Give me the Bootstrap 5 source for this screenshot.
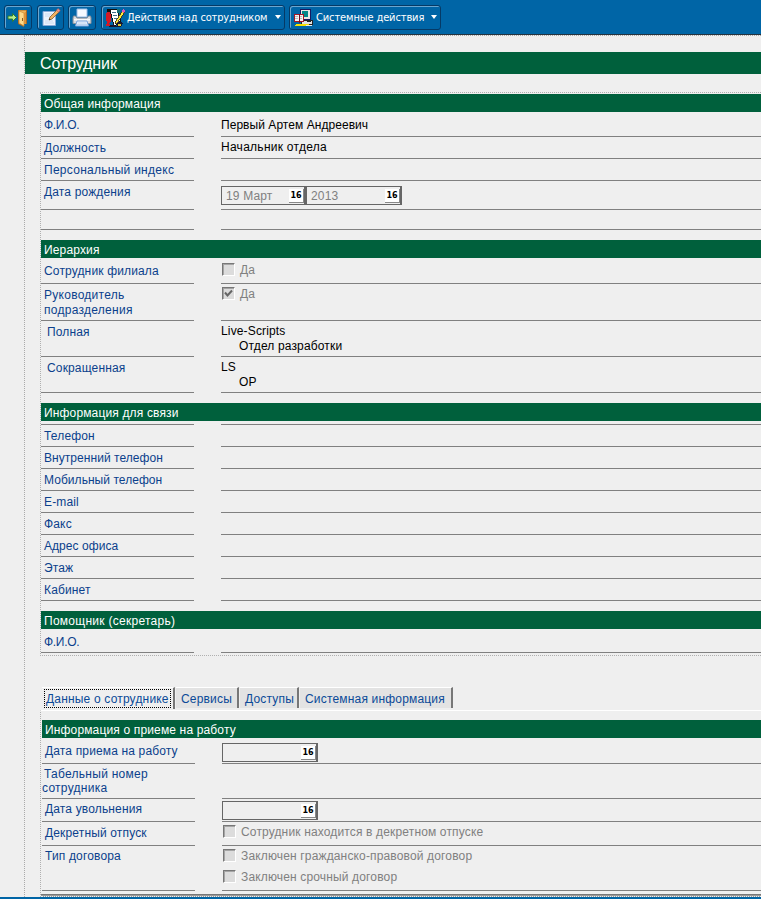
<!DOCTYPE html>
<html lang="ru">
<head>
<meta charset="utf-8">
<meta name="viewport" content="width=device-width, initial-scale=1">
<title>Сотрудник</title>
<link rel="stylesheet" href="https://cdn.jsdelivr.net/npm/bootstrap@5.3.0/dist/css/bootstrap.min.css">
<style>
body{background:#efefef;font:12px/15px "Liberation Sans",Arial,sans-serif;letter-spacing:.15px;color:#000;height:899px;overflow:hidden}
.toolbar{height:35px;background:#0065a6;border-bottom:1px solid #24333f;padding:5px 0 0 4px;gap:4px;font-family:"DejaVu Sans Condensed","DejaVu Sans",sans-serif;font-stretch:condensed}
.tool{height:25px;width:28px;padding:0;border:1px solid #053a66;border-radius:3px;box-shadow:inset 1px 1px #6ba6d0;background:#0065a6;color:#fff!important;font-size:11px;line-height:15px;letter-spacing:-.12px}
.tool:nth-child(1),.tool:nth-child(3){margin-right:1px}
.tool:nth-child(2){width:27px}
.tool svg{flex:none}
.tool-wide{padding:0 3px}
.tool-wide.dropdown-toggle::after{border-top:4px solid #fff;border-left:3.5px solid transparent;border-right:3.5px solid transparent;margin:0 0 2px auto}
.tool-staff{width:184px}
.tool-staff span{margin-left:1px;letter-spacing:-.15px}
.tool-system{width:152px}
.tool-system span{margin-left:3px}
.sheet{margin-left:24px;height:862px;border-left:1px dotted #aaa;border-top:1px dotted #aaa;padding-top:16px}
.sheet-title{height:22px;background:#00603c;color:#fff;font-size:16px;line-height:24px;padding-left:15px;letter-spacing:-.1px}
.panel{margin-left:15px;border-left:1px dotted #b0b0b0}
.panel-top{margin-top:18px;border-top:1px dotted #b0b0b0;border-bottom:1px dotted #b0b0b0;padding:1px 0 2px}
.panel-low{border-top:1px solid #fff;padding-top:9px}
.panel-low .band,.panel-low .line{margin-left:1px}
.band{height:18px;background:#00603c;color:#fff;line-height:20px;padding-left:3px}
.band-gap{margin-top:10px}
.line{height:22px}
.cap,.val{border-bottom:1px solid #808080}
.cap{width:153px;margin-right:27px;padding:4px 0 0 3px;color:#0b3f8c;flex:none}
.val{padding-top:3px}
.first .cap{padding-top:6px}.first .val{padding-top:5px}
.t2 .cap{padding-top:3px}
.h4x{height:4px}.h4x .cap,.h4x .val{padding:0}
.h20{height:20px}.h23{height:23px}.h24{height:24px}.h25{height:25px}.h26{height:26px}.h29{height:29px}.h35{height:35px}.h36{height:36px}.h37{height:37px}.h45{height:45px}
.first .val.full-name{padding-top:6px;letter-spacing:.05px}
.loose{letter-spacing:.27px}
.tight{letter-spacing:-.3px}
.snug{letter-spacing:.05px}
.val.dates{padding-top:5px}
.date{height:19px;width:96px;border:1px solid #666;border-right-width:2px;padding:1px 0 0 4px;color:#808080;line-height:17px}
.date-short{width:85px}
.date-low .val{padding-top:2px}
.date-low.first .val{padding-top:5px}
.cal{width:15px;height:14px;background:#fff;border-right:1px solid #888;border-bottom:1px solid #888;color:#000;font:bold 8px/14px "DejaVu Sans",sans-serif;letter-spacing:0;text-align:center;margin-top:1px}
.tick{width:13px;height:13px;background:#dcdcdc;border:1px solid;border-color:#777 #fff #fff #777;box-shadow:inset 1px 1px #a5a5a5;margin:-2px 5px 0 1px;flex:none}
.off{color:#808080;height:15px}
.later{margin-top:6px}
.indent{padding-left:6px}
.sub{padding-left:18px}
.two-line{line-height:14px;padding-left:0;text-indent:2px}
.tabs{margin:31px 0 0 17px;height:23px;color:#0b4a98;letter-spacing:.18px}
.tabx{height:21px;border-top:1px solid #fff;border-right:2px solid #777;background:#e3e3e3;line-height:22px;padding-left:5px;margin-right:1px;white-space:nowrap;color:#0b4a98;text-decoration:none}
.tabx.on{width:133px;height:22px;background:#efefef;padding:1px 2px 0}
.tabx.on span{display:block;border:1px dotted #000;height:19px;line-height:19px;padding:0 1px}
.tab-b{width:63px}.tab-c{width:59px}.tab-d{width:153px}
.endline{height:3px;background:#999;border-top:1px solid #777;border-bottom:1px dotted #eee;margin-top:3px}
.foot{height:2px;background:#0065a6}
</style>
</head>
<body>
<nav class="toolbar d-flex align-items-start">
  <button class="tool btn d-flex align-items-center justify-content-center" aria-label="Выход">
    <svg width="22" height="20" viewBox="0 0 22 20"><path d="M11 2h9v14h-3v3l-6-3z" fill="#a96a25"/><path d="M12 2.500h7V16h-7z" fill="#f3b559"/><path d="M12 3l5 2v13l-5-3z" fill="#ffda8b" stroke="#c88834" stroke-width=".7"/><path d="M17 5l2-1.500V16h-2z" fill="#df9239"/><path d="M15.500 10v3" stroke="#915c21"/><path d="M1 8h4.500V5.500l4 4-4 4V11H1z" fill="#b8ed8b" stroke="#2d7828" stroke-width=".9"/></svg>
  </button>
  <button class="tool btn d-flex align-items-center justify-content-center" aria-label="Правка">
    <svg width="22" height="21" viewBox="0 0 22 21"><path d="M3 4.500h12.500v14H3z" fill="#edf3fd" stroke="#87a8d7"/><path d="M5 7h7M5 9h5M5 14h8M5 16h9" stroke="#cbdaf0"/><path d="M9 13l1-3 7-7 2 2-7 7z" fill="#f2b263" stroke="#805d36" stroke-width=".8"/><path d="M16.500 3.200L18 1.600l2.200 2-1.600 1.700z" fill="#f09a92" stroke="#b95b55" stroke-width=".7"/><path d="M9 13l.5-1.600 1.200 1z" fill="#222"/></svg>
  </button>
  <button class="tool btn d-flex align-items-center justify-content-center" aria-label="Печать">
    <svg width="22" height="21" viewBox="0 0 22 21"><path d="M6 2h10v8H6z" fill="#f7faff" stroke="#9bbce6"/><path d="M2.500 9h2L6 11h10l1.500-2h2l.5 2v5.500H2V11z" fill="#d9dbdf" stroke="#89909a"/><path d="M3 12h16v1.500H3z" fill="#fafafa"/><path d="M6 14h10l1.500 5h-13z" fill="#f0f6ff" stroke="#77a2dd"/><path d="M6.500 16h9M6 17.500h10" stroke="#b2cceb" stroke-width=".8"/></svg>
  </button>
  <button class="tool tool-wide tool-staff btn dropdown-toggle d-flex align-items-center">
    <svg width="21" height="20" viewBox="0 0 21 20" shape-rendering="crispEdges"><path d="M1 5l3-3 2 3v8l-2 2 2 3H1l1-4-1-1z" fill="#d31926"/><path d="M2 1h3v3H2z" fill="#111"/><path d="M5 2l7-1 4 13-7 4z" fill="#fff" stroke="#111"/><path d="M7 5l4-1M8 8l4-1M9 11l4-1M10 14l3-1" stroke="#45718c"/><path d="M12 1h3v4h-3z" fill="#176d72"/><path d="M18 2l2 2-8 11-2 1 1-3z" fill="#ffe83b" stroke="#332b10" stroke-width=".8"/><path d="M17 2l2-1 1 2-2 2z" fill="#dc55bc"/><path d="M4 18l5-2 2 3H4zM14 13l4 2-2 4h-5z" fill="#181830"/><path d="M13 16h3v2h-3z" fill="#e0cc32"/></svg>
    <span>Действия над сотрудником</span>
  </button>
  <button class="tool tool-wide tool-system btn dropdown-toggle d-flex align-items-center">
    <svg width="20" height="20" viewBox="0 0 20 20" shape-rendering="crispEdges"><path d="M7 1h10v10H7z" fill="#e5e5e5" stroke="#181860"/><path d="M9 3h6v6H9z" fill="#008689"/><path d="M8 12h11v4H8z" fill="#e1e1e1" stroke="#222"/><path d="M14 13h4v1h-4z" fill="#222"/><path d="M1 6h9v7H1z" fill="#f6f1f1" stroke="#a31828"/><path d="M6 6v9" stroke="#7a1020"/><path d="M2 8h3M2 10h3M7 8h2M7 10h2" stroke="#bbb"/><path d="M3 16h12l3 2H1z" fill="#f7df00"/><path d="M13 17h6v1h-6z" fill="#e9e9e9"/></svg>
    <span>Системные действия</span>
  </button>
</nav>

<main class="sheet">
  <h1 class="sheet-title fw-normal m-0">Сотрудник</h1>

  <section class="panel panel-top">
    <div class="band">Общая информация</div>
    <div class="line h25 first d-flex"><div class="cap tight">Ф.И.О.</div><div class="val full-name flex-grow-1">Первый Артем Андреевич</div></div>
    <div class="line d-flex"><div class="cap">Должность</div><div class="val loose flex-grow-1">Начальник отдела</div></div>
    <div class="line d-flex"><div class="cap loose">Персональный индекс</div><div class="val flex-grow-1"></div></div>
    <div class="line h29 d-flex"><div class="cap">Дата рождения</div><div class="val dates flex-grow-1"><div class="d-flex"><div class="date date-short d-flex justify-content-between"><span>19 Март</span><span class="cal">16</span></div><div class="date d-flex justify-content-between"><span>2013</span><span class="cal">16</span></div></div></div></div>
    <div class="line h20 d-flex"><div class="cap"></div><div class="val flex-grow-1"></div></div>

    <div class="band band-gap">Иерархия</div>
    <div class="line h26 first d-flex"><div class="cap">Сотрудник филиала</div><div class="val flex-grow-1"><div class="off d-flex align-items-center"><span class="tick"></span>Да</div></div></div>
    <div class="line h37 d-flex"><div class="cap loose">Руководитель<br>подразделения</div><div class="val flex-grow-1"><div class="off d-flex align-items-center"><span class="tick d-flex"><svg width="11" height="11" viewBox="0 0 11 11"><path d="M2 4.500L4.500 7.500 9 2.500" fill="none" stroke="#666" stroke-width="2"/></svg></span>Да</div></div></div>
    <div class="line h36 d-flex"><div class="cap indent">Полная</div><div class="val flex-grow-1">Live-Scripts<div class="sub">Отдел разработки</div></div></div>
    <div class="line h36 d-flex"><div class="cap indent">Сокращенная</div><div class="val flex-grow-1">LS<div class="sub">ОР</div></div></div>

    <div class="band band-gap">Информация для связи</div>
    <div class="line h4x d-flex"><div class="cap"></div><div class="val flex-grow-1"></div></div>
    <div class="line d-flex"><div class="cap">Телефон</div><div class="val flex-grow-1"></div></div>
    <div class="line d-flex"><div class="cap snug">Внутренний телефон</div><div class="val flex-grow-1"></div></div>
    <div class="line d-flex"><div class="cap snug">Мобильный телефон</div><div class="val flex-grow-1"></div></div>
    <div class="line d-flex"><div class="cap">E-mail</div><div class="val flex-grow-1"></div></div>
    <div class="line d-flex"><div class="cap">Факс</div><div class="val flex-grow-1"></div></div>
    <div class="line d-flex"><div class="cap snug">Адрес офиса</div><div class="val flex-grow-1"></div></div>
    <div class="line d-flex"><div class="cap">Этаж</div><div class="val flex-grow-1"></div></div>
    <div class="line d-flex"><div class="cap">Кабинет</div><div class="val flex-grow-1"></div></div>

    <div class="band band-gap loose">Помощник (секретарь)</div>
    <div class="line h24 first d-flex"><div class="cap tight">Ф.И.О.</div><div class="val flex-grow-1"></div></div>
  </section>

  <div class="tabs d-flex align-items-start">
    <a class="tabx on"><span>Данные о сотруднике</span></a>
    <a class="tabx tab-b">Сервисы</a>
    <a class="tabx tab-c">Доступы</a>
    <a class="tabx tab-d">Системная информация</a>
  </div>

  <section class="panel panel-low">
    <div class="band">Информация о приеме на работу</div>
    <div class="line h26 first date-low d-flex"><div class="cap">Дата приема на работу</div><div class="val flex-grow-1"><div class="date d-flex justify-content-end"><span class="cal">16</span></div></div></div>
    <div class="line h35 t2 d-flex"><div class="cap two-line loose">Табельный номер<br>сотрудника</div><div class="val flex-grow-1"></div></div>
    <div class="line h23 t2 date-low d-flex"><div class="cap">Дата увольнения</div><div class="val flex-grow-1"><div class="date d-flex justify-content-end"><span class="cal">16</span></div></div></div>
    <div class="line h24 d-flex"><div class="cap">Декретный отпуск</div><div class="val flex-grow-1"><div class="off d-flex align-items-center"><span class="tick"></span>Сотрудник находится в декретном отпуске</div></div></div>
    <div class="line h45 t2 d-flex"><div class="cap">Тип договора</div><div class="val flex-grow-1"><div class="off d-flex align-items-center"><span class="tick"></span>Заключен гражданско-правовой договор</div><div class="off later d-flex align-items-center"><span class="tick"></span>Заключен срочный договор</div></div></div>
    <div class="endline"></div>
  </section>
</main>
<footer class="foot"></footer>
<script src="https://cdn.jsdelivr.net/npm/bootstrap@5.3.0/dist/js/bootstrap.bundle.min.js"></script>
</body>
</html>
